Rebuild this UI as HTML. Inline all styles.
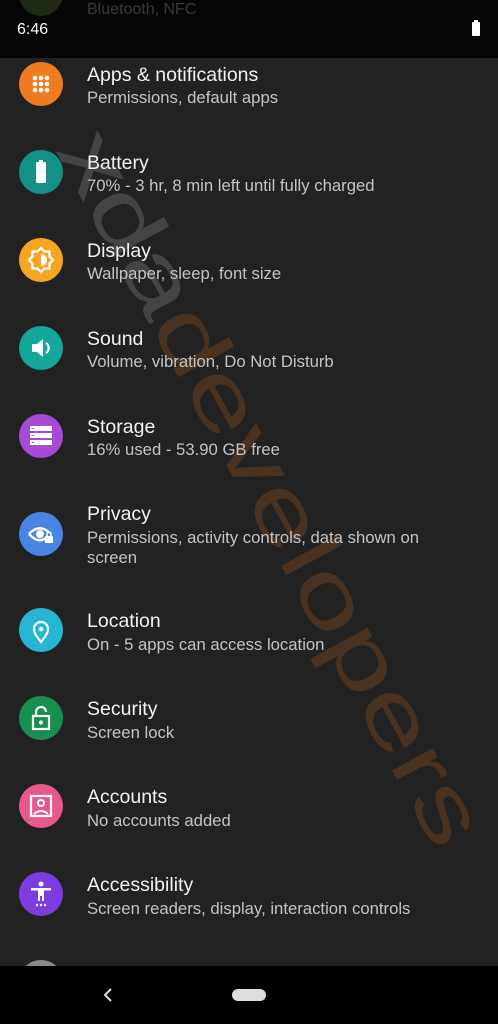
<!DOCTYPE html>
<html><head><meta charset="utf-8"><style>
body{margin:0;width:498px;height:1024px;background:#222222;overflow:hidden;position:relative;font-family:"Liberation Sans",Roboto,sans-serif}
.sb{position:absolute;left:0;top:0;width:498px;height:58px;background:#050505}
.nav{position:absolute;left:0;top:966px;width:498px;height:58px;background:#000}
.row{position:absolute;left:0;width:498px}
.ic{position:absolute;left:19px;width:44px;height:44px;border-radius:50%}
.ic svg{position:absolute;left:0;top:0}
.t{position:absolute;left:87px;color:#f2f2f2;font-size:19.5px;white-space:nowrap}
.s{position:absolute;left:87px;color:#c4c4c4;font-size:16.7px;line-height:20px;white-space:nowrap}
</style></head><body>
<div class="sb">
<div style="position:absolute;left:87px;top:1px;color:#3a3a3a;font-size:16px">Bluetooth, NFC</div>
<div style="position:absolute;left:19px;top:-28px;width:44px;height:44px;border-radius:50%;background:#1e2a12"></div>
<div style="position:absolute;left:17px;top:21px;color:#fff;font-size:16px">6:46</div>
<div style="position:absolute;left:472px;top:22px;width:8px;height:14px;background:#fff;border-radius:1px"></div>
<div style="position:absolute;left:474px;top:20px;width:4px;height:2px;background:#fff"></div>
</div>

<svg style="position:absolute;left:0;top:0" width="498" height="1024">
<text x="0" y="0" transform="translate(55,150) rotate(61.5)" font-family="Liberation Sans,sans-serif" font-size="88" textLength="800" lengthAdjust="spacingAndGlyphs"><tspan fill="#444">xda</tspan><tspan fill="#4a3220">developers</tspan></text>
</svg>

<div class="row" style="top:62px"><div class="ic" style="top:0;background:#f07c22"><svg width="44" height="44"><g fill="#fff"><circle cx="16" cy="16" r="2.3"/><circle cx="22" cy="16" r="2.3"/><circle cx="28" cy="16" r="2.3"/><circle cx="16" cy="22" r="2.3"/><circle cx="22" cy="22" r="2.3"/><circle cx="28" cy="22" r="2.3"/><circle cx="16" cy="28" r="2.3"/><circle cx="22" cy="28" r="2.3"/><circle cx="28" cy="28" r="2.3"/></g></svg></div><div class="t" style="top:2px">Apps &amp; notifications</div><div class="s" style="top:26px">Permissions, default apps</div></div>

<div class="row" style="top:150px"><div class="ic" style="top:0;background:#139186"><svg width="44" height="44"><rect x="17" y="12" width="10" height="21" rx="1.5" fill="#fff"/><rect x="20" y="10" width="4" height="3" fill="#fff"/></svg></div><div class="t" style="top:2px">Battery</div><div class="s" style="top:26px">70% - 3 hr, 8 min left until fully charged</div></div>

<div class="row" style="top:238px"><div class="ic" style="top:0;background:#f5a522"><svg width="44" height="44"><path d="M22 10l3.5 3.5h5v5L34 22l-3.5 3.5v5h-5L22 34l-3.5-3.5h-5v-5L10 22l3.5-3.5v-5h5z" fill="none" stroke="#fff" stroke-width="2.2"/><path d="M22 16a6 6 0 0 1 0 12z" fill="#fff"/></svg></div><div class="t" style="top:2px">Display</div><div class="s" style="top:26px">Wallpaper, sleep, font size</div></div>

<div class="row" style="top:326px"><div class="ic" style="top:0;background:#12a79a"><svg width="44" height="44"><path d="M13 18h5l6-5v18l-6-5h-5z" fill="#fff"/><path d="M27 17a6 6 0 0 1 0 10" fill="none" stroke="#fff" stroke-width="2.2"/></svg></div><div class="t" style="top:2px">Sound</div><div class="s" style="top:26px">Volume, vibration, Do Not Disturb</div></div>

<div class="row" style="top:414px"><div class="ic" style="top:0;background:#a64bd6"><svg width="44" height="44"><g fill="#fff"><rect x="11" y="12" width="22" height="5"/><rect x="11" y="19" width="22" height="5"/><rect x="11" y="26" width="22" height="5"/></g><g fill="#a64bd6"><rect x="13" y="14" width="2" height="1"/><rect x="13" y="21" width="2" height="1"/><rect x="13" y="28" width="2" height="1"/></g></svg></div><div class="t" style="top:2px">Storage</div><div class="s" style="top:26px">16% used - 53.90 GB free</div></div>

<div class="row" style="top:512px"><div class="ic" style="top:0;background:#4a85e6"><svg width="44" height="44"><path d="M10 22q10-11 21-1" fill="none" stroke="#fff" stroke-width="2.4"/><path d="M10 22q9 10 17 4" fill="none" stroke="#fff" stroke-width="2.4"/><circle cx="21" cy="22" r="4" fill="#fff"/><rect x="26" y="24" width="8" height="7" rx="1" fill="#fff"/><path d="M28 24v-2a2 2 0 0 1 4 0v2" fill="none" stroke="#fff" stroke-width="1.5"/></svg></div><div class="t" style="top:-9px">Privacy</div><div class="s" style="top:16px">Permissions, activity controls, data shown on<br>screen</div></div>

<div class="row" style="top:608px"><div class="ic" style="top:0;background:#26b6d4"><svg width="44" height="44"><path d="M22 34c-4-5-7-9-7-13a7 7 0 0 1 14 0c0 4-3 8-7 13z" fill="none" stroke="#fff" stroke-width="2.2"/><circle cx="22" cy="21" r="2.3" fill="#fff"/></svg></div><div class="t" style="top:2px">Location</div><div class="s" style="top:27px">On - 5 apps can access location</div></div>

<div class="row" style="top:696px"><div class="ic" style="top:0;background:#17904f"><svg width="44" height="44"><rect x="14" y="20" width="16" height="13" fill="none" stroke="#fff" stroke-width="2.2"/><path d="M17 20v-4a5 5 0 0 1 10 0" fill="none" stroke="#fff" stroke-width="2.2"/><circle cx="22" cy="26.5" r="2" fill="#fff"/></svg></div><div class="t" style="top:2px">Security</div><div class="s" style="top:27px">Screen lock</div></div>

<div class="row" style="top:784px"><div class="ic" style="top:0;background:#e8588f"><svg width="44" height="44"><rect x="12" y="12" width="20" height="20" fill="none" stroke="#fff" stroke-width="2.2"/><circle cx="22" cy="19" r="3" fill="none" stroke="#fff" stroke-width="2"/><path d="M15 30q7-6 14 0" fill="none" stroke="#fff" stroke-width="2"/></svg></div><div class="t" style="top:2px">Accounts</div><div class="s" style="top:27px">No accounts added</div></div>

<div class="row" style="top:872px"><div class="ic" style="top:0;background:#7b3ce0"><svg width="44" height="44"><circle cx="22" cy="12" r="2.5" fill="#fff"/><path d="M12 16h20v2.5h-7V29h-2v-5h-2v5h-2V18.5h-7z" fill="#fff"/><g fill="#fff"><circle cx="18" cy="33" r="1.2"/><circle cx="22" cy="33" r="1.2"/><circle cx="26" cy="33" r="1.2"/></g></svg></div><div class="t" style="top:2px">Accessibility</div><div class="s" style="top:27px">Screen readers, display, interaction controls</div></div>

<div style="position:absolute;left:19px;top:960px;width:44px;height:44px;border-radius:50%;background:#8a8a8a"></div>

<div class="nav">
<svg style="position:absolute;left:100px;top:20px" width="16" height="18"><path d="M11 3L5 9l6 6" fill="none" stroke="#ddd" stroke-width="2"/></svg>
<div style="position:absolute;left:232px;top:23px;width:34px;height:12px;border-radius:6px;background:#ddd"></div>
</div>
</body></html>
